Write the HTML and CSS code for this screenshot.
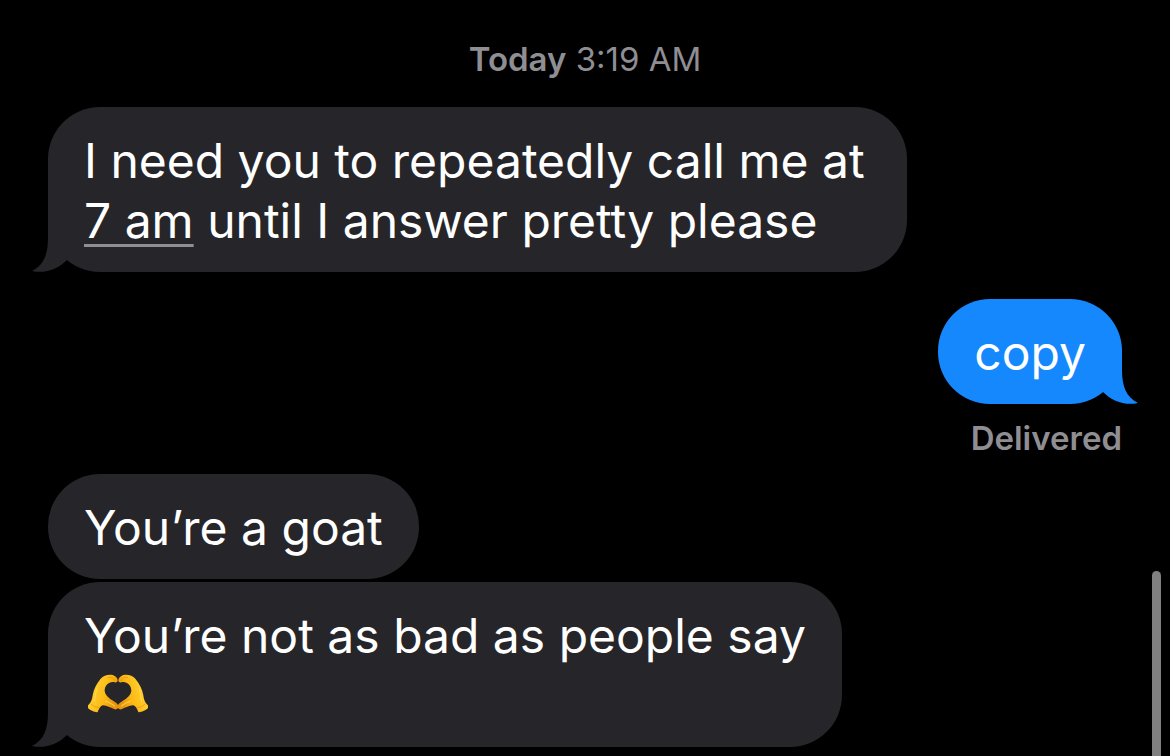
FILE: index.html
```html
<!DOCTYPE html>
<html lang="en">
<head>
<meta charset="utf-8">
<title>Messages</title>
<link rel="stylesheet" href="styles.css">
</head>
<body>
<main class="thread">
  <p class="stamp"><strong>Today</strong> <time>3:19 AM</time></p>

  <div class="message received">
    <p class="bubble">I need you to repeatedly call me at <a class="detected" href="#">7 am</a> until I answer pretty please
      <svg class="tail" viewBox="0 0 42 56" aria-hidden="true"><path d="M16 0V22C16 38 12 49 0 55C13 58 26 53 35 44L40 30Z"/></svg>
    </p>
  </div>

  <div class="message sent">
    <p class="bubble">copy
      <svg class="tail" viewBox="0 0 42 56" aria-hidden="true"><path d="M16 0V22C16 38 12 49 0 55C13 58 26 53 35 44L40 30Z"/></svg>
    </p>
    <p class="status">Delivered</p>
  </div>

  <div class="message received">
    <p class="bubble">You’re a goat</p>
    <p class="bubble">You’re not as bad as people say<br>
      <svg class="emoji" viewBox="36 30 180 120" role="img" aria-label="heart hands">
        <defs>
          <linearGradient id="skin" x1="0" y1="0" x2="1" y2="0.4">
            <stop offset="0" stop-color="#f5a60c"/>
            <stop offset="0.35" stop-color="#ffcb2b"/>
            <stop offset="0.7" stop-color="#fcb813"/>
            <stop offset="1" stop-color="#e8960b"/>
          </linearGradient>
          <g id="hand">
            <path fill="url(#skin)" d="M36 124C46 115 48 107 50 94C53 76 61 60 74 44C83 33 98 30 110 33C119 36 125 42 125 49C125 55 119 57 113 54C99 52 86 64 86 80C87 93 98 101 109 109C118 115 126 119 127 127C127 135 121 138 114 135C103 131 91 123 80 124C72 126 69 135 65 144C62 147 37 138 35 130Z"/>
            <path fill="none" stroke="#e08e0e" stroke-width="2" stroke-linecap="round" d="M98 40C106 38 113 43 117 50M45 120C51 127 60 131 67 130"/>
            <path fill="none" stroke="#ffdc55" stroke-width="3" stroke-linecap="round" d="M62 75C58 88 59 101 55 111M89 112C101 115 109 121 116 126"/>
          </g>
        </defs>
        <use href="#hand"/>
        <use href="#hand" transform="translate(252 0) scale(-1 1)"/>
      </svg>
      <svg class="tail" viewBox="0 0 42 56" aria-hidden="true"><path d="M16 0V22C16 38 12 49 0 55C13 58 26 53 35 44L40 30Z"/></svg>
    </p>
  </div>
</main>
<div class="scrollbar" aria-hidden="true"></div>
</body>
</html>
```
FILE: styles.css
```css
* { box-sizing: border-box; }

body {
  margin: 0;
  min-height: 100vh;
  background: #000;
  color: #fff;
  font-family: Inter, "Liberation Sans", sans-serif;
  overflow: hidden;
  position: relative;
}

p { margin: 0; }

.thread {
  display: flex;
  flex-direction: column;
  padding: 39px 48px 9px;
}

.stamp {
  margin-bottom: 28px;
  color: #8e8e93;
  font-size: 33px;
  line-height: 40px;
  text-align: center;
}

.stamp strong { font-weight: 600; }

.message {
  display: flex;
  flex-direction: column;
  align-items: flex-start;
  gap: 3px;
}

.sent {
  align-items: flex-end;
  gap: 14px;
  margin: 27px 0 16px;
}

.bubble {
  position: relative;
  max-width: 80%;
  padding: 24px 36px 21px;
  border-radius: 52px;
  background: #26262a;
  font-size: 48px;
  line-height: 60px;
}

.sent .bubble { background: #1588fe; }

.detected {
  color: inherit;
  text-decoration: underline;
  text-decoration-color: #8e8e93;
  text-decoration-thickness: 3px;
  text-underline-offset: 6px;
  text-decoration-skip-ink: none;
}

.tail {
  position: absolute;
  left: -16px;
  bottom: 0;
  width: 42px;
  height: 56px;
  fill: #26262a;
}

.sent .tail {
  left: auto;
  right: -16px;
  fill: #1588fe;
  transform: scaleX(-1);
}

.emoji {
  display: block;
  width: 60px;
  height: 40px;
  margin: 8px 4px 12px;
}

.status {
  color: #8e8e93;
  font-size: 33px;
  font-weight: 600;
  line-height: 40px;
}

.scrollbar {
  position: absolute;
  top: 571px;
  right: 9px;
  bottom: 0;
  width: 9px;
  border-radius: 5px 5px 0 0;
  background: #808080;
}
```
